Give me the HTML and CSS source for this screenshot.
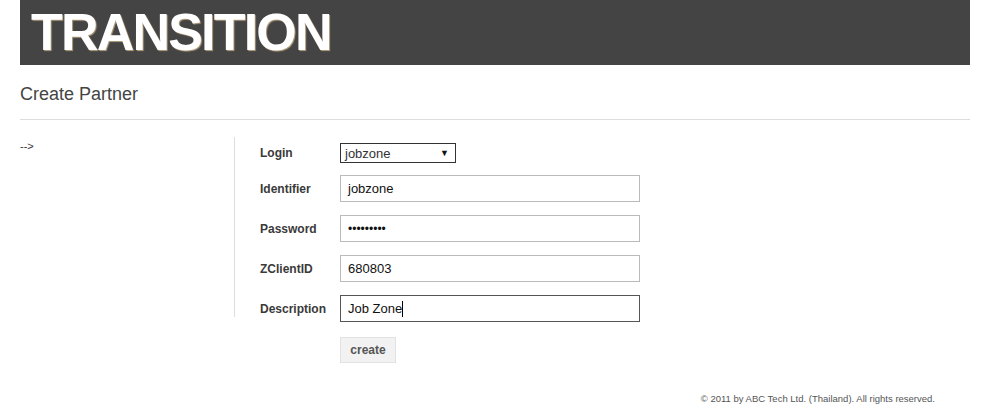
FILE: index.html
```html
<!DOCTYPE html>
<html>
<head>
<meta charset="utf-8">
<link rel="stylesheet" href="styles.css">
</head>
<body>
<div class="page">
  <header class="masthead"><h1 class="brand">TRANSITION</h1></header>
  <h2 class="page-title">Create Partner</h2>
  <hr class="rule">
  <div class="content">
    <div class="sidebar">--&gt;</div>
    <form class="form">
      <div class="row row-select">
        <label class="label">Login</label>
        <div class="select"><span>jobzone</span><span class="arrow">▼</span></div>
      </div>
      <div class="row">
        <label class="label">Identifier</label>
        <div class="input">jobzone</div>
      </div>
      <div class="row">
        <label class="label">Password</label>
        <div class="input dots">•••••••••</div>
      </div>
      <div class="row">
        <label class="label">ZClientID</label>
        <div class="input">680803</div>
      </div>
      <div class="row">
        <label class="label">Description</label>
        <div class="input focus">Job Zone<span class="caret"></span></div>
      </div>
      <div class="row row-btn">
        <span class="label"></span>
        <div class="btn">create</div>
      </div>
    </form>
  </div>
  <footer class="footer">© 2011 by ABC Tech Ltd. (Thailand). All rights reserved.</footer>
</div>
</body>
</html>
```

FILE: styles.css
```css
* { box-sizing: border-box; }
html, body { margin: 0; padding: 0; background: #fff; }
body { font-family: "Liberation Sans", Arial, sans-serif; color: #333; }
.page { width: 950px; margin: 0 0 0 20px; }
.masthead { background: #444444; height: 65px; padding-left: 11px; }
.brand {
  margin: 0; font-size: 52px; line-height: 65px; font-weight: bold; color: #fff;
  letter-spacing: -1.8px;
  text-shadow: 1px 1px 1px rgba(230, 200, 150, 0.7);
}
.page-title { margin: 0; padding-top: 19px; font-size: 18px; line-height: 20px; font-weight: normal; color: #444; }
.rule { margin: 15px 0 0 0; border: 0; border-top: 1px solid #ddd; height: 0; }
.content { display: flex; padding-top: 17px; }
.sidebar { width: 215px; height: 180px; border-right: 1px solid #ddd; font-size: 11px; line-height: 14px; padding-top: 2px; color: #333; flex: none; }
.form { padding-left: 25px; padding-top: 6px; display: flex; flex-direction: column; gap: 12px; }
.row { display: flex; align-items: center; }
.row + .row { margin-top: 1px; }
.row-select + .row { margin-top: 0; }
.label { width: 80px; font-size: 12px; font-weight: bold; color: #3a3a3a; flex: none; }
.select {
  width: 116px; height: 20px; border: 1px solid #333; display: flex; justify-content: space-between; align-items: center;
  padding: 0 6px 0 4px; font-size: 13px; color: #333; background: #fff;
}
.arrow { font-size: 9px; color: #111; }
.input {
  width: 300px; height: 27px; border: 1px solid #bbb; font-size: 13px; color: #111; padding: 0 7px; display: flex; align-items: center;
}
.input.focus { border-color: #555; }
.dots { font-size: 12px; }
.caret { display: inline-block; width: 1px; height: 16px; background: #000; }
.row-btn { margin-top: 3px !important; }
.btn {
  width: 56px; height: 26px; border: 1px solid #e2e2e2; background: #f2f2f2; color: #555; font-size: 12px; font-weight: bold;
  display: flex; align-items: center; justify-content: center;
}
.footer { text-align: right; font-size: 9.5px; color: #555; padding-right: 35px; margin-top: 30px; }
```
